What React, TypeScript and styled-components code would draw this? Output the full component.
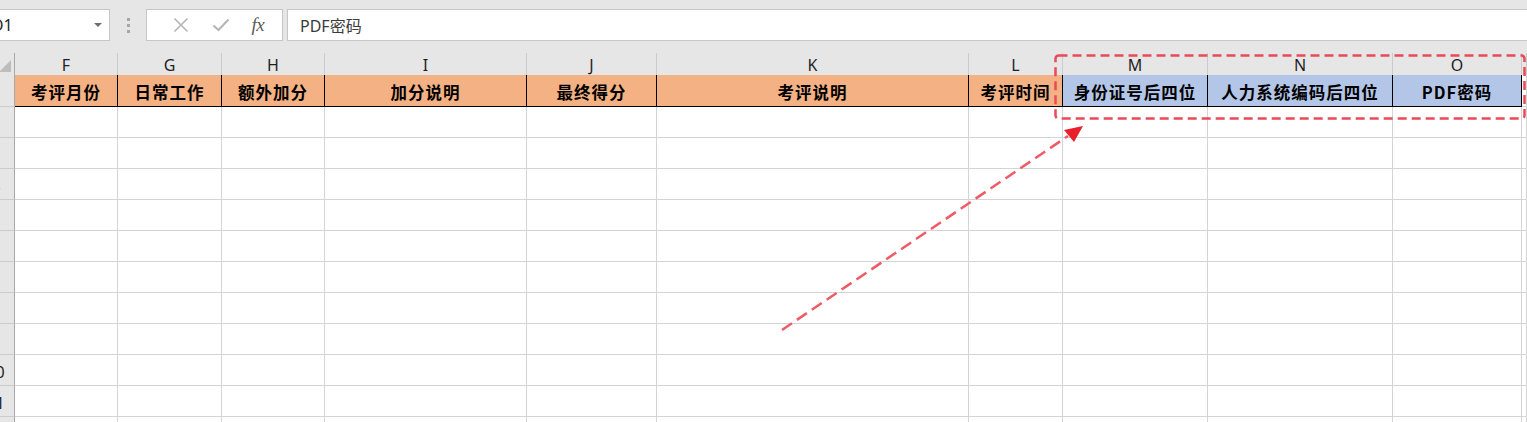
import React from "react";
import styled, { createGlobalStyle } from "styled-components";

const GlobalStyle = createGlobalStyle`
  html, body { margin: 0; padding: 0; background: #ffffff; overflow: hidden; }
  body { font-family: "Noto Sans", "Noto Sans CJK SC", sans-serif; }
  #root { position: relative; width: 1527px; height: 422px; overflow: hidden; }
`;

type Tone = "orange" | "blue" | "none";

interface Column {
  key: string;
  width: number;
  title?: string;
  tone: Tone;
}

const columns: Column[] = [
  { key: "F", width: 103, title: "考评月份", tone: "orange" },
  { key: "G", width: 104, title: "日常工作", tone: "orange" },
  { key: "H", width: 103, title: "额外加分", tone: "orange" },
  { key: "I", width: 202, title: "加分说明", tone: "orange" },
  { key: "J", width: 130, title: "最终得分", tone: "orange" },
  { key: "K", width: 312, title: "考评说明", tone: "orange" },
  { key: "L", width: 94, title: "考评时间", tone: "orange" },
  { key: "M", width: 145, title: "身份证号后四位", tone: "blue" },
  { key: "N", width: 185, title: "人力系统编码后四位", tone: "blue" },
  { key: "O", width: 129, title: "PDF密码", tone: "blue" },
  { key: "P", width: 0, tone: "none" },
];

const dataRows = [2, 3, 4, 5, 6, 7, 8, 9, 10, 11, 12];

const toneColor: Record<Tone, string> = {
  orange: "#f4b183",
  blue: "#b4c6e7",
  none: "#ffffff",
};

const Page = styled.div`
  position: relative;
  width: 1527px;
  height: 422px;
  overflow: hidden;
  background: #e6e6e6;
`;

const FormulaBar = styled.div`
  display: flex;
  align-items: flex-start;
  height: 53px;
  padding-top: 9px;
  box-sizing: border-box;
  background: #e6e6e6;
`;

const NameBox = styled.div`
  display: flex;
  align-items: center;
  justify-content: space-between;
  margin-left: -40px;
  width: 150px;
  height: 32px;
  box-sizing: border-box;
  padding: 0 7px 0 30px;
  background: #ffffff;
  border: 1px solid #c6c6c6;
  font-family: "Noto Sans", sans-serif;
  font-size: 16px;
  color: #262626;
`;

const DropArrow = styled.span`
  width: 0;
  height: 0;
  border-left: 4px solid transparent;
  border-right: 4px solid transparent;
  border-top: 4px solid #6f6f6f;
`;

const Grip = styled.div`
  display: flex;
  flex-direction: column;
  gap: 3px;
  margin: 9px 16px 0 17px;
`;

const GripDot = styled.span`
  display: block;
  width: 3px;
  height: 3px;
  background: #a6a6a6;
`;

const FuncBox = styled.div`
  display: flex;
  align-items: center;
  width: 137px;
  height: 32px;
  box-sizing: border-box;
  padding-left: 14px;
  gap: 0;
  background: #ffffff;
  border: 1px solid #c6c6c6;
`;

const FuncButton = styled.span`
  display: flex;
  align-items: center;
  justify-content: center;
  width: 44px;
  height: 30px;
`;

const FxLabel = styled.span`
  font-family: "Liberation Serif", "DejaVu Serif", serif;
  font-style: italic;
  font-size: 19px;
  color: #5c5c5c;
  letter-spacing: -0.5px;
  margin-left: -8px;
`;

const FormulaInput = styled.div`
  flex: 1;
  display: flex;
  align-items: center;
  height: 32px;
  box-sizing: border-box;
  margin-left: 4px;
  margin-right: -4px;
  padding-left: 12px;
  background: #ffffff;
  border: 1px solid #c6c6c6;
  font-family: "Noto Sans", "Noto Sans CJK SC", sans-serif;
  font-size: 16px;
  color: #3a3a3a;
`;

const Sheet = styled.div<{ $template: string }>`
  display: grid;
  grid-template-columns: ${(p) => p.$template};
  grid-template-rows: 22px 32px;
  grid-auto-rows: 31px;
  margin-left: -23px;
  width: calc(100% + 23px);
  background: #ffffff;
`;

const CellBase = styled.div`
  display: flex;
  align-items: center;
  justify-content: center;
  box-sizing: border-box;
  overflow: hidden;
  white-space: nowrap;
`;

const Corner = styled(CellBase)`
  position: relative;
  background: #e6e6e6;
  border-right: 1px solid #a8a8a8;
  &::after {
    content: "";
    position: absolute;
    right: 3px;
    bottom: 3px;
    width: 0;
    height: 0;
    border-left: 12px solid transparent;
    border-bottom: 12px solid #bdbdbd;
  }
`;

const ColHeader = styled(CellBase)`
  background: #e6e6e6;
  border-right: 1px solid #cbcbcb;
  font-family: "Noto Sans", sans-serif;
  font-size: 16px;
  color: #1f1f1f;
  padding-top: 1px;
`;

const RowHeader = styled(CellBase)`
  background: #e6e6e6;
  border-right: 1px solid #a8a8a8;
  border-bottom: 1px solid #cbcbcb;
  font-family: "Noto Sans", sans-serif;
  font-size: 16px;
  color: #1f1f1f;
  padding-top: 4px;
`;

const TitleCell = styled(CellBase)<{ $tone: Tone }>`
  background: ${(p) => toneColor[p.$tone]};
  border-right: 1px solid ${(p) => (p.$tone === "none" ? "#d4d4d4" : "#000000")};
  border-bottom: 1px solid ${(p) => (p.$tone === "none" ? "#d4d4d4" : "#000000")};
  font-family: "Noto Sans CJK SC", "Noto Sans", sans-serif;
  font-weight: 700;
  font-size: 16.5px;
  letter-spacing: 1px;
  color: #000000;
  padding-top: 2px;
`;

const DataCell = styled(CellBase)`
  border-right: 1px solid #d4d4d4;
  border-bottom: 1px solid #d4d4d4;
`;

const Overlay = styled.svg`
  position: absolute;
  left: 0;
  top: 0;
  width: 1527px;
  height: 422px;
  pointer-events: none;
`;

const CrossIcon = () => (
  <svg width="16" height="16" viewBox="0 0 16 16">
    <path d="M1.5 1.5 L14.5 14.5 M14.5 1.5 L1.5 14.5" stroke="#b5b5b5" strokeWidth="1.6" fill="none" />
  </svg>
);

const CheckIcon = () => (
  <svg width="18" height="14" viewBox="0 0 18 14">
    <path d="M1.5 7.5 L6.5 12 L16.5 1.5" stroke="#b5b5b5" strokeWidth="2" fill="none" />
  </svg>
);

export default function App() {
  const template = ["38px", ...columns.map((c) => (c.width ? `${c.width}px` : "1fr"))].join(" ");

  return (
    <Page>
      <GlobalStyle />
      <FormulaBar>
        <NameBox>
          <span>O1</span>
          <DropArrow />
        </NameBox>
        <Grip>
          <GripDot />
          <GripDot />
          <GripDot />
        </Grip>
        <FuncBox>
          <FuncButton>
            <CrossIcon />
          </FuncButton>
          <FuncButton>
            <CheckIcon />
          </FuncButton>
          <FuncButton>
            <FxLabel>fx</FxLabel>
          </FuncButton>
        </FuncBox>
        <FormulaInput>PDF密码</FormulaInput>
      </FormulaBar>

      <Sheet $template={template}>
        <Corner />
        {columns.map((c) => (
          <ColHeader key={`h-${c.key}`}>{c.width ? c.key : ""}</ColHeader>
        ))}

        <RowHeader>1</RowHeader>
        {columns.map((c) => (
          <TitleCell key={`t-${c.key}`} $tone={c.tone}>
            {c.title ?? ""}
          </TitleCell>
        ))}

        {dataRows.map((r) => (
          <React.Fragment key={`r-${r}`}>
            <RowHeader>{r}</RowHeader>
            {columns.map((c) => (
              <DataCell key={`d-${r}-${c.key}`} />
            ))}
          </React.Fragment>
        ))}
      </Sheet>

      <Overlay viewBox="0 0 1527 422">
        <rect
          x="1055.5"
          y="55.5"
          width="469"
          height="63"
          rx="3"
          fill="none"
          stroke="#ea4a55"
          strokeWidth="2.5"
          strokeDasharray="9 5"
        />
        <line
          x1="782"
          y1="330"
          x2="1068"
          y2="136"
          stroke="#ee5b65"
          strokeWidth="2.5"
          strokeDasharray="12 6"
        />
        <polygon points="1083,126 1064,130 1074,142" fill="#e8202c" />
      </Overlay>
    </Page>
  );
}
